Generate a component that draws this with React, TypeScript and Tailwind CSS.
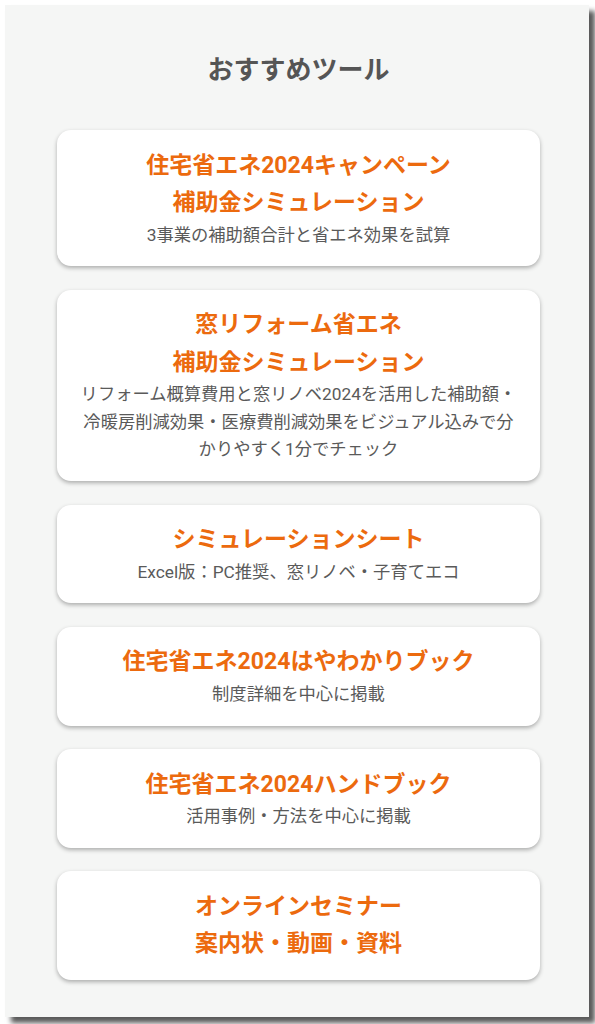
const tools = [
  {
    title: ['住宅省エネ2024キャンペーン', '補助金シミュレーション'],
    desc: ['3事業の補助額合計と省エネ効果を試算'],
  },
  {
    title: ['窓リフォーム省エネ', '補助金シミュレーション'],
    desc: [
      'リフォーム概算費用と窓リノベ2024を活用した補助額・',
      '冷暖房削減効果・医療費削減効果をビジュアル込みで分',
      'かりやすく1分でチェック',
    ],
  },
  {
    title: ['シミュレーションシート'],
    desc: ['Excel版：PC推奨、窓リノベ・子育てエコ'],
  },
  {
    title: ['住宅省エネ2024はやわかりブック'],
    desc: ['制度詳細を中心に掲載'],
  },
  {
    title: ['住宅省エネ2024ハンドブック'],
    desc: ['活用事例・方法を中心に掲載'],
  },
  {
    title: ['オンラインセミナー', '案内状・動画・資料'],
    desc: [],
  },
]

export default function App() {
  return (
    <div
      className="w-[595px] h-[1024px] bg-white pt-[5px] pl-[5px] overflow-hidden"
      style={{ fontFamily: 'Roboto, "Noto Sans CJK JP", sans-serif' }}
    >
      <div className="w-[584px] h-[1012px] bg-[#f5f6f5] shadow-[6px_6px_5px_rgba(0,0,0,0.65)] pt-[46px] pl-[52px] pr-[49px]">
        {/* Heading */}
        <h2 className="text-center text-[26px] leading-[38px] font-bold text-[#555555]">
          おすすめツール
        </h2>

        {/* Tool cards */}
        <div className="mt-[41px] flex flex-col gap-[23.5px]">
          {tools.map((tool, i) => (
            <a
              key={i}
              href="#"
              className="block bg-white rounded-[14px] shadow-[0_2px_4px_rgba(0,0,0,0.3)] pt-[16.5px] pb-[17.25px] text-center"
            >
              <div className="text-[23px] leading-[37.5px] font-bold text-[#ec6a0e]">
                {tool.title.map((t) => (
                  <div key={t}>{t}</div>
                ))}
              </div>
              {tool.desc.length > 0 && (
                <div className="text-[17.3px] leading-[27.5px] text-[#5a5a5a]">
                  {tool.desc.map((d) => (
                    <div key={d}>{d}</div>
                  ))}
                </div>
              )}
            </a>
          ))}
        </div>
      </div>
    </div>
  )
}
